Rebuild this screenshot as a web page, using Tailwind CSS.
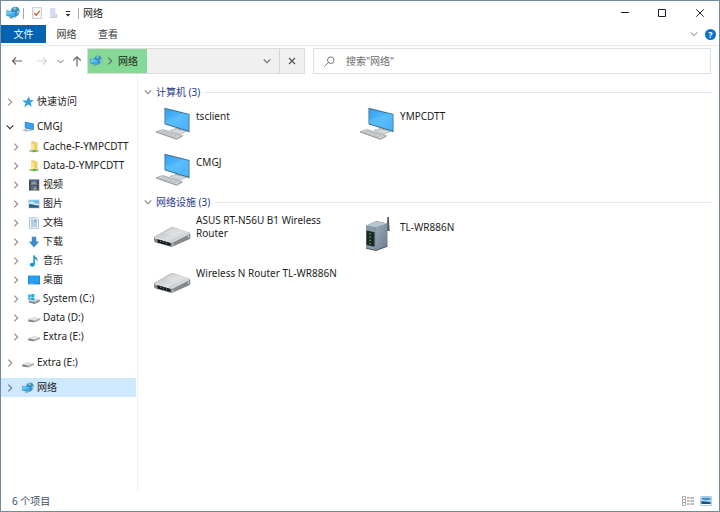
<!DOCTYPE html>
<html lang="zh-CN">
<head>
<meta charset="utf-8">
<meta name="viewport" content="width=device-width, initial-scale=1">
<title>网络</title>
<script src="https://cdn.jsdelivr.net/npm/@tailwindcss/browser@4"></script>
</head>
<body class="bg-white font-['Noto_Sans','Noto_Sans_CJK_SC',sans-serif] text-[10px] leading-[13px] text-[#1c1c1c]">

<svg class="absolute size-0" aria-hidden="true">
  <defs>
    <linearGradient id="screen" x1="0" y1="0" x2="1" y2="1"><stop offset="0" stop-color="#35a0f0"/><stop offset=".5" stop-color="#4fb8fb"/><stop offset="1" stop-color="#36a3f3"/></linearGradient>
    <linearGradient id="metal" x1="0" y1="0" x2="1" y2="1"><stop offset="0" stop-color="#b9bcbe"/><stop offset=".6" stop-color="#dcdedf"/><stop offset="1" stop-color="#96999b"/></linearGradient>
    <linearGradient id="tower" x1="0" y1="0" x2="1" y2="1"><stop offset="0" stop-color="#9aaab8"/><stop offset="1" stop-color="#6a7c8d"/></linearGradient>
  </defs>
  <symbol id="right" viewBox="0 0 8 8"><path d="M2.300.7L5.700 4 2.300 7.300" fill="none" stroke="currentColor" stroke-width="1.100"/></symbol>
  <symbol id="down" viewBox="0 0 8 8"><path d="M.7 2.400L4 5.700l3.300-3.300" fill="none" stroke="currentColor" stroke-width="1.100"/></symbol>
  <symbol id="net" viewBox="0 0 14 14">
    <path d="M8.300.8q4.400-.6 5.200 3.400.6 4-2.700 6.300L5.500 9 5 3.500Q6 1.200 8.300.8z" fill="#3f8dbd"/>
    <path d="M7 2.300l2.500-1.300 1 2-2 1.200zM11.300 5l2-.5-.5 2.800-1.500 1z" fill="#8fc9dc"/>
    <path d="M.4 4.300l9.300 1.500v6L.4 10z" fill="#2b8fd0"/>
    <path d="M1.100 5.100l7.900 1.300v4.400L1.100 9.300z" fill="#3fb0ee"/>
    <path d="M1.100 5.100l7.900 1.300-7.900 2z" fill="#72cbf7"/>
    <path d="M4 10.700l2.700.5.300 1.500-4.200-.7z" fill="#7d97a8"/>
  </symbol>
  <symbol id="star" viewBox="0 0 12 12"><path d="M7 .3l1.100 3.700 3.900.3-3.300 2.200 1 4.300-3.400-2.400-4 3.100L3.700 7.300.2 4.500l4.300-.1z" fill="#2f9fe8"/></symbol>
  <symbol id="pc" viewBox="0 0 12 12">
    <path d="M2.800.8l9 1.800v6.500L2.800 7.200z" fill="#2479b8"/><path d="M3.300 1.500l8 1.600v5.200L3.300 6.700z" fill="#35a4ec"/>
    <path d="M0 9l3-1.300 4.800 1.700-3.200 1.700z" fill="#b9c1c7"/><path d="M6.500 8.500l3 .6v1l-2.500-.6z" fill="#8b9aa5"/>
  </symbol>
  <symbol id="netfolder" viewBox="0 0 12 12">
    <path d="M3.300.2h3l.7 1h2.500v8H3.300z" fill="#f0ce62"/><path d="M3.300 2.300L6 3.200v6.500l-2.700-1z" fill="#fbe59a"/>
    <path d="M1.300 10h9.400" stroke="#6eaf5b" stroke-width="1.300"/><path d="M4.500 9h3.500v2.200H4.500z" fill="#58b648"/>
  </symbol>
  <symbol id="video" viewBox="0 0 12 12">
    <path d="M1 .5h10.200v11H1z" fill="#39404c"/><path d="M3 1.200h6.200v4.400H3z" fill="#4a78b3"/><path d="M3 6.400h6.200v4.400H3z" fill="#53709d"/>
    <path d="M3 4.500l3-2 3.200 3H3zM5 10.800l2-3.500 2.200 3.500z" fill="#b69a61"/>
    <path d="M2 1v10.500M10.200 1v10.500" stroke="#aab0b8" stroke-width=".6" stroke-dasharray="1 1"/>
  </symbol>
  <symbol id="picture" viewBox="0 0 12 12">
    <path d="M.2 1.500h11.600v9H.2z" fill="#cfdae3"/><path d="M1.100 2.300h9.800v7.400H1.100z" fill="#6db9ec"/>
    <path d="M1.100 4.500l3-1.200 3 2 3.800.7v1H1.100z" fill="#d5effb"/><path d="M1.100 6l3 .3 6.800 1.600v1.800H1.100z" fill="#315f83"/>
  </symbol>
  <symbol id="doc" viewBox="0 0 12 12">
    <path d="M1.500.7h7l2 2v8.700h-9z" fill="#eff7fb" stroke="#a3b7c4" stroke-width=".8"/><path d="M3 3h2.500M3 5h6M3 7h6M3 9h6" stroke="#6a9fc4" stroke-width=".9"/><path d="M6.500 2.500h2v2h-2z" fill="#4a9bd1"/>
  </symbol>
  <symbol id="download" viewBox="0 0 12 12"><path d="M3.800.8h4.400v4.700h3L6 11.400.8 5.500h3z" fill="#3a8bd0"/></symbol>
  <symbol id="music" viewBox="0 0 12 12"><path d="M5.300.2h1.300c.2 2 4 2.600 3 6.600-.3-1.800-1.300-2.600-2.700-2.900v5.300c0 1.400-1.200 2.500-2.600 2.500S1.800 10.900 1.800 9.800s1.100-2 2.500-2c.4 0 .7 0 1 .2z" fill="#1594df"/></symbol>
  <symbol id="desktop" viewBox="0 0 12 12"><path d="M0 1.600h12v8.800H0z" fill="#1188dd"/><path d="M.8 2.300h10.400v6.400H.8z" fill="#27a0f2"/><path d="M1.200 9.600h5" stroke="#bce3fb" stroke-width=".5"/></symbol>
  <symbol id="drive" viewBox="0 0 12 12"><path d="M.2 7.300l5.500-1.800 6.200.8v1.800L6.300 10.600l-6.100-1z" fill="#a7abad"/><path d="M.2 7.300l5.500-1.800 6.200.8-5.600 2.100z" fill="#dfe1e2"/><path d="M.6 8l4.600.8v1.100L.6 9.100z" fill="#6b7074"/></symbol>
  <symbol id="sysdrive" viewBox="0 0 12 12"><path d="M.8 7.700l5.200-1.900 5.800 1v1.700L6.500 11l-5.700-1.400z" fill="#85898c"/><path d="M.8 7.700l5.200-1.900 5.800 1-5.300 2.300z" fill="#d9dcdd"/><path d="M.2 1.800l2.500-.4v2.500H.2zM3.200 1.300L6.300.9v3H3.200zM.2 4.400h2.500v2.500l-2.500-.4zM3.200 4.400h3.100v3l-3.100-.4z" fill="#1aa5e8"/></symbol>

  <symbol id="computer" viewBox="0 0 38 34">
    <path d="M11.500.8l25 6.200v18.200L11.500 17.300z" fill="#3b6a8a"/>
    <path d="M12.300 1.900l23.400 5.900v16L12.300 16.600z" fill="url(#screen)"/>
    <path d="M12.300 13L31 6.600l4.700 1.200v16L12.300 16.600z" fill="#6cc8ff" opacity=".35"/>
    <path d="M22.500 20.700l5 1.600 1 2.500-6.500-1.700z" fill="#8f989e"/>
    <path d="M17 23.300l6.500-1.600 9.500 2.800-5.800 2.600z" fill="#d5dadd" stroke="#9aa3a9" stroke-width=".6"/>
    <path d="M3 24.700l6.700-2.200 19.800 6.200-6 3.300z" fill="#dadddf" stroke="#979fa5" stroke-width=".7"/>
    <path d="M3 25l20.500 7.300 6-3.300" fill="none" stroke="#7f878c" stroke-width=".7"/>
    <path d="M6 24.700l17.500 5.800M8 23.800l18 6M10 23.100l17.500 5.600M8 26l4.500-2.500M12 27.200l4.500-2.500M16 28.500l4.500-2.500M20 29.800l4.500-2.500" stroke="#a4abb0" stroke-width=".5"/>
  </symbol>
  <symbol id="router" viewBox="0 0 38 34">
    <path d="M1 20l17-9.500q1.500-.5 3-.1l15 5q1.500.7 1.300 2v3.200q0 1-1 1.600L20.500 29.300q-1.500.8-3.200.4L2.500 25.500Q1 25 1 23.500z" fill="#85898c"/>
    <path d="M1.300 19.700L17.600 10.500q1.500-.7 3.200-.2L36 15.500q1.500.8.2 1.600L20.500 25q-1.500.7-3.200.3L2 21.300q-1.500-.8-.7-1.600z" fill="url(#metal)"/>
    <path d="M2 20.900l16.500 4.700 17.800-8.900" stroke="#eff0f1" stroke-width=".7" fill="none"/>
    <path d="M4.500 22.300l13 3.600v3.200l-13-3.600z" fill="#151a1d"/>
    <path d="M7 24.300l1 .3M10 25.100l1 .3M13 26l1 .3" stroke="#80939d" stroke-width="1"/>
    <path d="M20 26.400v2.500M35.500 18v3" stroke="#d3d6d8" stroke-width=".8"/>
    <path d="M13 16l8-4.300M15 16.800l9-4.500M17 17.600l10-4.900M19 18.400l11-5.200" stroke="#eceeef" stroke-width=".6"/>
  </symbol>
  <symbol id="modem" viewBox="0 0 38 34">
    <path d="M30.300 0q.8-1 1.500 0l.8 14h-2.800z" fill="#4c5358"/>
    <path d="M9 8.500L19 4.200q1-.4 2 0l9.300 2.300v22.800L19 33.500 9 31z" fill="#627485"/>
    <path d="M9 8.500L19.500 4.200l10.800 2.300-11.500 4z" fill="#b9c6cf"/>
    <path d="M18.800 10.500l11.500-4v22.800L18.800 33.600z" fill="url(#tower)"/>
    <path d="M9 8.500l9.800 2v23.100L9 31.200z" fill="#8999a7"/>
    <path d="M9.500 13.500l8 1.800v14.500l-8-1.900z" fill="#1b2625"/>
    <path d="M13 16.300v12" stroke="#55bd4e" stroke-width="1.500" stroke-dasharray="1.200 2"/>
    <path d="M9 31.200l9.800 2.400 11.500-4.300" stroke="#3b4853" stroke-width=".8" fill="none"/>
  </symbol>
</svg>

<div class="flex min-h-screen flex-col border border-[#74899a] bg-white">

  <header class="flex h-6 shrink-0 items-center pl-[5px]">
    <svg class="size-[14px]"><use href="#net"/></svg>
    <span class="ml-[3px] h-[11px] w-px bg-[#aaa]"></span>
    <button type="button" aria-label="属性" class="ml-2"><svg class="h-3 w-[10px]" viewBox="0 0 10 12"><path d="M.7.7h8.600v10.600H.7z" fill="#fff" stroke="#b1b7bd" stroke-width=".8"/><path d="M2.200 6l2 2.200 3.600-4.400" fill="none" stroke="#e0562b" stroke-width="1.300"/></svg></button>
    <button type="button" aria-label="新建文件夹" class="ml-[7px]"><svg class="h-3 w-[10px]" viewBox="0 0 10 12"><path d="M1 1h5.500v10H1z" fill="#d5def0"/><path d="M6.500 7H8v4H2v-1h4.500z" fill="#bccae3"/></svg></button>
    <button type="button" aria-label="自定义快速访问工具栏" class="ml-[5px]"><svg class="h-2 w-2" viewBox="0 0 8 8"><path d="M1.700 2.500h4.600" stroke="#333"/><path d="M1.700 5h4.600L4 7.500z" fill="#222"/></svg></button>
    <span class="ml-[6px] h-[11px] w-px bg-[#aaa]"></span>
    <h1 class="ml-1">网络</h1>
    <div class="ml-auto flex h-full">
      <button type="button" aria-label="最小化" class="grid w-[37px] place-items-center"><svg class="size-2" viewBox="0 0 8 8"><path d="M0 3.500h8" stroke="#222"/></svg></button>
      <button type="button" aria-label="最大化" class="grid w-[37px] place-items-center"><svg class="size-2" viewBox="0 0 8 8"><path d="M.5.5h7v7h-7z" fill="none" stroke="#222"/></svg></button>
      <button type="button" aria-label="关闭" class="grid w-[39px] place-items-center"><svg class="size-2" viewBox="0 0 8 8"><path d="M.3.300l7.400 7.400M7.700.3L.3 7.700" stroke="#222"/></svg></button>
    </div>
  </header>

  <nav aria-label="功能区" class="flex h-[21px] shrink-0 items-start border-b border-[#e6e8ea] text-[#3a3a3a]">
    <button type="button" class="h-[18px] w-[45px] bg-[#0363b1] text-white">文件</button>
    <button type="button" class="h-[18px] w-[41px]">网络</button>
    <button type="button" class="h-[18px] w-[42px]">查看</button>
    <button type="button" aria-label="展开功能区" class="mt-[5px] ml-auto text-[#aaa]"><svg class="size-2"><use href="#down"/></svg></button>
    <button type="button" aria-label="帮助" class="mt-[4px] mr-[3px] ml-[7px] size-[11px] rounded-full bg-[#0b6fcb] text-[9px] leading-[11px] font-bold text-white">?</button>
  </nav>

  <div class="mt-[2px] flex h-[26px] shrink-0 items-stretch pr-2 pl-[10px] text-[#666]">
    <div class="flex items-center">
      <button type="button" aria-label="后退"><svg class="h-3 w-3" viewBox="0 0 12 12"><path d="M11 6H1.500M5 2.500L1.500 6 5 9.500" fill="none" stroke="#666" stroke-width="1.100"/></svg></button>
      <button type="button" aria-label="前进" class="ml-[13px]"><svg class="h-3 w-3" viewBox="0 0 12 12"><path d="M1 6h9.500M7 2.500L10.500 6 7 9.500" fill="none" stroke="#d4d4d4" stroke-width="1.100"/></svg></button>
      <button type="button" aria-label="最近位置" class="ml-[9px]"><svg class="size-[7px]"><use href="#down"/></svg></button>
      <button type="button" aria-label="上移" class="ml-[7px]"><svg class="h-3 w-3" viewBox="0 0 12 12"><path d="M6 11.500V2M2.300 5.500L6 1.800l3.700 3.700" fill="none" stroke="#666" stroke-width="1.200"/></svg></button>
    </div>
    <div class="ml-[4px] flex min-w-[218px] flex-[218] border border-[#dcdcdc] bg-[#f0f0f0]">
      <button type="button" class="flex w-[59px] items-center bg-[#85d996] pl-[2px] text-[#1c1c1c]">
        <svg class="size-3"><use href="#net"/></svg>
        <svg class="ml-[4px] size-2 text-[#666]"><use href="#right"/></svg>
        <span class="ml-[4px]">网络</span>
      </button>
      <button type="button" aria-label="以前的位置" class="ml-auto grid w-6 place-items-center"><svg class="size-2"><use href="#down"/></svg></button>
      <button type="button" aria-label="停止加载" class="grid w-[25px] place-items-center border-l border-[#d5d5d5]"><svg class="size-2" viewBox="0 0 8 8"><path d="M1 1l6 6M7 1L1 7" stroke="#555" stroke-width="1.200"/></svg></button>
    </div>
    <label class="ml-2 flex flex-[398] items-center border border-[#dce0e4] pl-[10px]">
      <svg class="size-[11px]" viewBox="0 0 11 11"><circle cx="6.800" cy="4.200" r="3.300" fill="none" stroke="#777"/><path d="M4.400 6.600L.6 10.400" stroke="#777"/></svg>
      <input type="search" aria-label="搜索网络" placeholder='搜索"网络"' class="ml-[11px] min-w-0 flex-1 outline-none placeholder:text-[#6b6b6b]">
    </label>
  </div>

  <div class="flex flex-1">
    <nav aria-label="导航窗格" class="w-[137px] shrink-0 border-r border-[#f0f3f6] pt-[18px] pr-px text-[#222]">
      <a href="#" class="flex h-[19px] items-center pl-[5px]"><svg class="size-2 text-[#8a8a8a]"><use href="#right"/></svg><svg class="mr-[3px] ml-2 size-3"><use href="#star"/></svg>快速访问</a>
      <a href="#" class="mt-[6px] flex h-[19px] items-center pl-[5px]"><svg class="size-2 text-[#333]"><use href="#down"/></svg><svg class="mr-[3px] ml-2 size-3"><use href="#pc"/></svg>CMGJ</a>
      <div class="mt-px pl-[11px]">
        <a href="#" class="flex h-[19px] items-center"><svg class="mr-2 size-2 text-[#8a8a8a]"><use href="#right"/></svg><svg class="mr-[3px] size-3"><use href="#netfolder"/></svg>Cache-F-YMPCDTT</a>
        <a href="#" class="flex h-[19px] items-center"><svg class="mr-2 size-2 text-[#8a8a8a]"><use href="#right"/></svg><svg class="mr-[3px] size-3"><use href="#netfolder"/></svg>Data-D-YMPCDTT</a>
        <a href="#" class="flex h-[19px] items-center"><svg class="mr-2 size-2 text-[#8a8a8a]"><use href="#right"/></svg><svg class="mr-[3px] size-3"><use href="#video"/></svg>视频</a>
        <a href="#" class="flex h-[19px] items-center"><svg class="mr-2 size-2 text-[#8a8a8a]"><use href="#right"/></svg><svg class="mr-[3px] size-3"><use href="#picture"/></svg>图片</a>
        <a href="#" class="flex h-[19px] items-center"><svg class="mr-2 size-2 text-[#8a8a8a]"><use href="#right"/></svg><svg class="mr-[3px] size-3"><use href="#doc"/></svg>文档</a>
        <a href="#" class="flex h-[19px] items-center"><svg class="mr-2 size-2 text-[#8a8a8a]"><use href="#right"/></svg><svg class="mr-[3px] size-3"><use href="#download"/></svg>下载</a>
        <a href="#" class="flex h-[19px] items-center"><svg class="mr-2 size-2 text-[#8a8a8a]"><use href="#right"/></svg><svg class="mr-[3px] size-3"><use href="#music"/></svg>音乐</a>
        <a href="#" class="flex h-[19px] items-center"><svg class="mr-2 size-2 text-[#8a8a8a]"><use href="#right"/></svg><svg class="mr-[3px] size-3"><use href="#desktop"/></svg>桌面</a>
        <a href="#" class="flex h-[19px] items-center"><svg class="mr-2 size-2 text-[#8a8a8a]"><use href="#right"/></svg><svg class="mr-[3px] size-3"><use href="#sysdrive"/></svg>System (C:)</a>
        <a href="#" class="flex h-[19px] items-center"><svg class="mr-2 size-2 text-[#8a8a8a]"><use href="#right"/></svg><svg class="mr-[3px] size-3"><use href="#drive"/></svg>Data (D:)</a>
        <a href="#" class="flex h-[19px] items-center"><svg class="mr-2 size-2 text-[#8a8a8a]"><use href="#right"/></svg><svg class="mr-[3px] size-3"><use href="#drive"/></svg>Extra (E:)</a>
      </div>
      <a href="#" class="mt-[7px] flex h-[19px] items-center pl-[5px]"><svg class="size-2 text-[#8a8a8a]"><use href="#right"/></svg><svg class="mr-[3px] ml-2 size-3"><use href="#drive"/></svg>Extra (E:)</a>
      <a href="#" aria-current="page" class="mt-[6px] flex h-[19px] items-center bg-[#cde8ff] pl-[5px]"><svg class="size-2 text-[#777]"><use href="#right"/></svg><svg class="mr-[3px] ml-2 size-3"><use href="#net"/></svg>网络</a>
    </nav>

    <main class="flex min-w-0 flex-1 flex-col gap-2 pt-[11px] pr-[7px] pl-[6px]">
      <section>
        <h2 class="flex h-[14px] items-center text-[#283a8c]"><svg class="mr-[4px] size-2 text-[#888]"><use href="#down"/></svg>计算机 (3)<span class="ml-[5px] h-px flex-1 bg-[#e2e5ea]"></span></h2>
        <ul class="mt-2 grid grid-cols-[repeat(auto-fill,204px)] gap-y-3 pl-[9px]">
          <li class="flex h-[34px] gap-[5px]"><svg class="h-[34px] w-[38px] shrink-0"><use href="#computer"/></svg><p class="flex h-[18px] items-center">tsclient</p></li>
          <li class="flex h-[34px] gap-[5px]"><svg class="h-[34px] w-[38px] shrink-0"><use href="#computer"/></svg><p class="flex h-[18px] items-center">YMPCDTT</p></li>
          <li class="flex h-[34px] gap-[5px]"><svg class="h-[34px] w-[38px] shrink-0"><use href="#computer"/></svg><p class="flex h-[18px] items-center">CMGJ</p></li>
        </ul>
      </section>
      <section>
        <h2 class="flex h-[14px] items-center text-[#283a8c]"><svg class="mr-[4px] size-2 text-[#888]"><use href="#down"/></svg>网络设施 (3)<span class="ml-[5px] h-px flex-1 bg-[#e2e5ea]"></span></h2>
        <ul class="mt-2 grid grid-cols-[repeat(auto-fill,204px)] gap-y-3 pl-[9px]">
          <li class="flex h-[34px] gap-[5px] pr-3"><svg class="h-[34px] w-[38px] shrink-0"><use href="#router"/></svg><p class="flex h-5 items-center">ASUS RT-N56U B1 Wireless Router</p></li>
          <li class="flex h-[34px] gap-[5px] pr-3"><svg class="h-[34px] w-[38px] shrink-0"><use href="#modem"/></svg><p class="flex h-5 items-center">TL-WR886N</p></li>
          <li class="flex h-[34px] gap-[5px] pr-3"><svg class="h-[34px] w-[38px] shrink-0"><use href="#router"/></svg><p class="flex h-5 items-center">Wireless N Router TL-WR886N</p></li>
        </ul>
      </section>
    </main>
  </div>

  <footer class="flex h-5 shrink-0 items-center pr-[7px] pl-[11px] text-[#3d5063]">
    <span>6 个项目</span>
    <button type="button" aria-label="详细信息" class="ml-auto"><svg class="h-[10px] w-3" viewBox="0 0 12 10"><path d="M.5.5h3v9h-3zM.5 3.500h3M.5 6.500h3" fill="none" stroke="#999" stroke-width=".8"/><path d="M5 2h2.500M8.500 2H12M5 5h2.500M8.500 5H12M5 8h2.500M8.500 8H12" stroke="#777"/></svg></button>
    <button type="button" aria-label="大缩略图" class="ml-[6px]"><svg class="h-[10px] w-3" viewBox="0 0 12 10"><path d="M.5.5h11v9H.5z" fill="#fff" stroke="#a7cfe9"/><path d="M1.500 1.500h9v6.500h-9z" fill="#3f8fd2"/><path d="M1.500 3.500l4 1 5-.5v1.500h-9z" fill="#d4eefa"/><path d="M1.500 5l9 1.500V8h-9z" fill="#245070"/></svg></button>
  </footer>
</div>
</body>
</html>
